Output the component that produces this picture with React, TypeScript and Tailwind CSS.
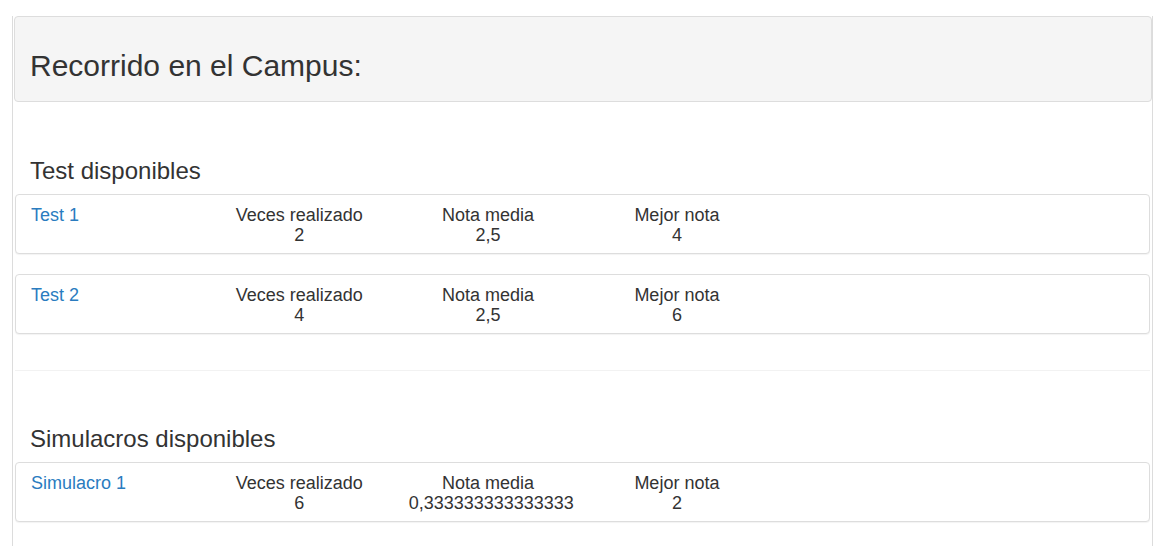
import React from "react";

type Item = { name: string; veces: string; media: string; mejor: string };

const tests: Item[] = [
  { name: "Test 1", veces: "2", media: "2,5", mejor: "4" },
  { name: "Test 2", veces: "4", media: "2,5", mejor: "6" },
];

const simulacros: Item[] = [
  { name: "Simulacro 1", veces: "6", media: "0,333333333333333", mejor: "2" },
];

function Row({ item }: { item: Item }) {
  return (
    <div className="mx-[2px] mb-5 rounded-[4px] border border-[#ddd] bg-white pt-[10px] pb-[8px] shadow-[0_1px_1px_rgba(0,0,0,0.05)]">
      <div className="grid grid-cols-6 text-[18px] leading-[20px] text-[#333]">
        <div className="px-[15px]">
          <a href="#" className="text-[#2a7cbf] no-underline">
            {item.name}
          </a>
        </div>
        <div className="px-[15px] text-center">
          <div>Veces realizado</div>
          <div>{item.veces}</div>
        </div>
        <div className="px-[15px] text-center whitespace-nowrap">
          <div>Nota media</div>
          <div>{item.media}</div>
        </div>
        <div className="px-[15px] text-center">
          <div>Mejor nota</div>
          <div>{item.mejor}</div>
        </div>
      </div>
    </div>
  );
}

function Section({ title, items, border }: { title: string; items: Item[]; border?: boolean }) {
  return (
    <div className={border ? "border-t border-[#f2f2f2] mx-[2px]" : ""}>
      <div className={border ? "-mx-[2px] pt-[55px] pb-[16px]" : "pt-[56px] pb-[16px]"}>
        <h3 className="mb-[10px] px-[17px] text-[24px] leading-[26px] font-normal text-[#333]">{title}</h3>
        {items.map((it) => (
          <Row key={it.name} item={it} />
        ))}
      </div>
    </div>
  );
}

export default function App() {
  return (
    <div
      className="min-h-[546px] bg-white pt-[16px]"
      style={{ fontFamily: '"Liberation Sans", Arial, Helvetica, sans-serif' }}
    >
      <div className="ml-[12px] w-[1141px] min-h-[530px] border-x border-[#dcdcdc]">
        <div className="ml-px rounded-[4px] border border-[#ddd] bg-[#f5f5f5] px-[15px] pt-[32px] pb-[19px]">
          <h2 className="text-[30px] leading-[33px] font-normal text-[#333]">Recorrido en el Campus:</h2>
        </div>
        <Section title="Test disponibles" items={tests} />
        <Section title="Simulacros disponibles" items={simulacros} border />
      </div>
    </div>
  );
}
